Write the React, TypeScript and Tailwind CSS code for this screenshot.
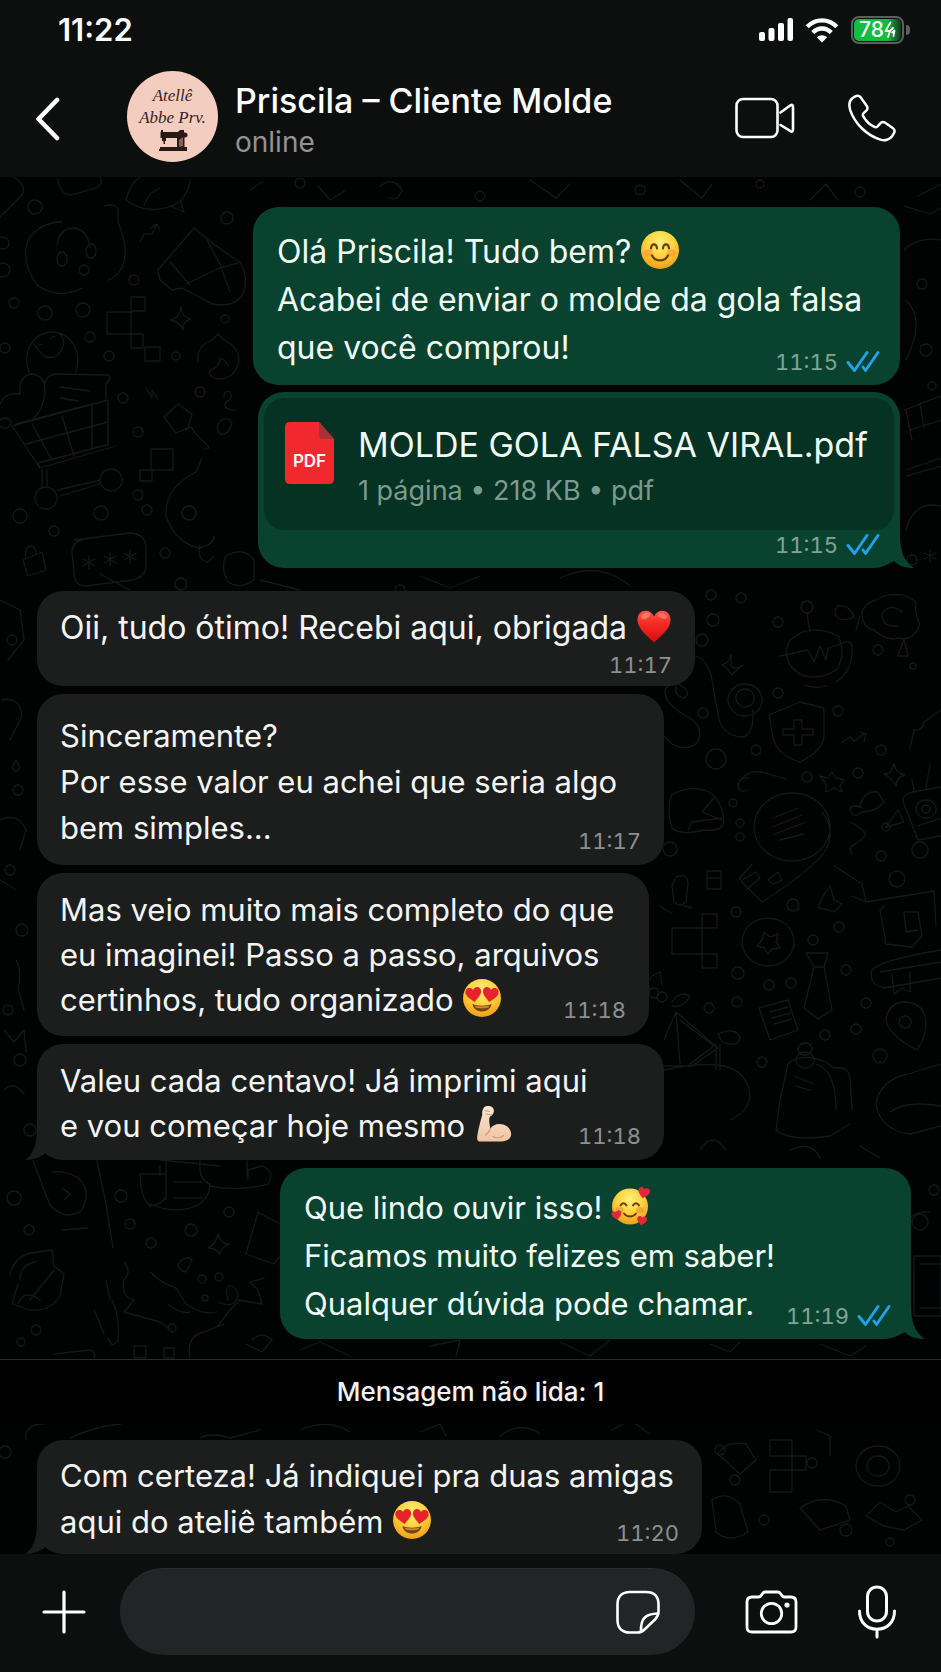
import React, { ReactNode } from "react";

const FONT = "font-['Inter','Liberation_Sans',sans-serif]";

/* ---------- emoji ---------- */

function Emoji({ label, children }: { label: string; children: ReactNode }) {
  return (
    <svg role="img" aria-label={label} viewBox="0 0 40 40" className="inline-block size-10 align-[-7px]">
      {children}
    </svg>
  );
}

function FaceFill({ id }: { id: string }) {
  return (
    <defs>
      <radialGradient id={id} cx="50%" cy="30%" r="72%">
        <stop offset="0" stopColor="#fff07a" />
        <stop offset="0.5" stopColor="#fed33d" />
        <stop offset="1" stopColor="#f09a16" />
      </radialGradient>
    </defs>
  );
}

const HEART = "M0 -2.6C-1.4 -5.6 -6.2 -4.8 -5.8 -.8C-5.4 2.4 -1.6 4.6 0 6.4C1.6 4.6 5.4 2.4 5.8 -.8C6.2 -4.8 1.4 -5.6 0 -2.6Z";

function SmileEmoji() {
  return (
    <Emoji label="rosto sorridente">
      <FaceFill id="face-smile" />
      <circle cx="20" cy="20" r="19" fill="url(#face-smile)" />
      <ellipse cx="8.5" cy="23" rx="4.5" ry="3.4" fill="#f7843a" opacity="0.45" />
      <ellipse cx="31.5" cy="23" rx="4.5" ry="3.4" fill="#f7843a" opacity="0.45" />
      <g fill="none" stroke="#6b3d10" strokeWidth="2.2" strokeLinecap="round">
        <path d="M11 18.5C11.5 13 16.5 13 17 18.5" />
        <path d="M23 18.5C23.500 13 28.5 13 29 18.5" />
        <path d="M12 25.5C15 32 25 32 28 25.5" />
      </g>
    </Emoji>
  );
}

function HeartEyesEmoji({ id }: { id: string }) {
  return (
    <Emoji label="rosto com olhos de coração">
      <FaceFill id={id} />
      <circle cx="20" cy="20" r="19" fill={"url(#" + id + ")"} />
      <path d={HEART} transform="translate(11.500 15.500) rotate(-8) scale(1.35)" fill="#e8222c" />
      <path d={HEART} transform="translate(28.500 15.500) rotate(8) scale(1.35)" fill="#e8222c" />
      <path d="M10.500 26C15 28.200 25 28.200 29.500 26C28.500 36 11.500 36 10.500 26Z" fill="#7a420f" />
      <path d="M13 27.600C17 28.800 23 28.800 27 27.600L26.500 29.500C23 30.400 17 30.400 13.500 29.500Z" fill="#c98a3a" />
    </Emoji>
  );
}

function HeartEmoji() {
  return (
    <svg role="img" aria-label="coração" viewBox="0 0 36 36" className="inline-block size-9 align-[-5px]">
      <defs>
        <linearGradient id="heart-red" x1="0" y1="0" x2="0" y2="1">
          <stop offset="0" stopColor="#ff5a4a" />
          <stop offset="0.4" stopColor="#f32b23" />
          <stop offset="1" stopColor="#d80c10" />
        </linearGradient>
      </defs>
      <path d="M18 8.500C14.500 0 1.500 1 1.500 12C1.500 21 11 27.500 18 34.500C25 27.500 34.500 21 34.500 12C34.500 1 21.500 0 18 8.500Z" fill="url(#heart-red)" />
      <ellipse cx="9.500" cy="8" rx="4.500" ry="2.500" fill="#ff9a88" opacity="0.6" transform="rotate(-25 9.500 8)" />
      <ellipse cx="26.500" cy="8" rx="4.500" ry="2.500" fill="#ff9a88" opacity="0.5" transform="rotate(20 26.500 8)" />
    </svg>
  );
}

function BicepsEmoji() {
  return (
    <Emoji label="bíceps flexionado">
      <defs>
        <linearGradient id="skin" x1="0" y1="0" x2="0" y2="1">
          <stop offset="0" stopColor="#fbe6d3" />
          <stop offset="1" stopColor="#efc4a4" />
        </linearGradient>
      </defs>
      <path
        d="M10 3.500C12 1.500 17 1.500 19 4C20.500 6 20 9.500 18 11.200C17 12.200 16 12 15.500 13.500C14.800 17 15.500 20.500 16.500 24.500C19 20.500 24 19 29 20.500C34.500 22 38 27 37 31.500C36 36 31 37.800 26 37.500H6C3.500 37.500 3 36 3.200 33C4 26 6.500 17 8.200 11C8 8 8.500 5 10 3.500Z"
        fill="url(#skin)"
      />
      <path d="M16.500 24.500C15.500 27 15 29 11.500 31M29.500 31.500C26 34.500 21.500 34 19 32.500M11 6.500L15.500 7.500M12 10L17.500 11" fill="none" stroke="#cf9a78" strokeWidth="1.200" strokeLinecap="round" />
    </Emoji>
  );
}

function LovedEmoji() {
  return (
    <Emoji label="rosto sorridente com corações">
      <FaceFill id="face-loved" />
      <circle cx="19" cy="20.500" r="18" fill="url(#face-loved)" />
      <ellipse cx="8.500" cy="24" rx="4" ry="3" fill="#f5743a" opacity="0.45" />
      <ellipse cx="29" cy="24" rx="4" ry="3" fill="#f5743a" opacity="0.45" />
      <g fill="none" stroke="#6b3d10" strokeWidth="1.900" strokeLinecap="round">
        <path d="M9.500 19.500C11 16.500 14 16.500 15.500 19.500" />
        <path d="M22 19.500C23.500 16.500 26.500 16.500 28 19.500" />
        <path d="M13 27.500C16 31.500 22 31.500 25 27.500" />
      </g>
      <path d={HEART} transform="translate(33 6) rotate(12) scale(1)" fill="#e3263a" />
      <path d={HEART} transform="translate(5.500 28.500) rotate(-10) scale(.85)" fill="#e3263a" />
      <path d={HEART} transform="translate(31 34) rotate(8) scale(.85)" fill="#e3263a" />
    </Emoji>
  );
}

/* ---------- wallpaper ---------- */

const DOTS: [number, number, number][] = [
  [35, 207, 7], [3, 243, 6], [3, 270, 7], [14, 303, 5], [45, 313, 7], [83, 310, 7], [134, 280, 5], [90, 337, 5],
  [5, 348, 5], [109, 356, 5], [176, 356, 4], [227, 218, 6], [225, 319, 4], [200, 392, 5], [123, 398, 5], [138, 432, 5],
  [20, 516, 7], [54, 531, 5], [101, 513, 7], [147, 510, 5], [189, 513, 7], [165, 553, 5], [181, 584, 6], [138, 495, 5],
  [711, 595, 5], [713, 620, 6], [702, 640, 6], [741, 598, 5], [807, 607, 6], [778, 622, 5], [878, 650, 5], [913, 666, 3],
  [778, 693, 5], [703, 713, 5], [756, 750, 5], [716, 759, 10], [838, 711, 5], [881, 750, 5], [807, 777, 5], [858, 773, 5],
  [733, 803, 4], [740, 823, 4], [740, 837, 4], [670, 849, 7], [886, 827, 4], [881, 856, 5], [897, 879, 8], [793, 905, 6],
  [736, 912, 5], [839, 927, 5], [813, 940, 5], [738, 973, 6], [769, 985, 5], [791, 983, 5], [846, 970, 5], [709, 1008, 5],
  [737, 1002, 5], [866, 1003, 5], [856, 1029, 5], [825, 1035, 5], [762, 1062, 5], [880, 1056, 7],
  [14, 1198, 7], [29, 1230, 5], [121, 1196, 6], [130, 1224, 5], [151, 1243, 5], [191, 1230, 6], [229, 1212, 5],
  [36, 1330, 5], [21, 1342, 4], [172, 1328, 4], [219, 1277, 4], [202, 1279, 4], [205, 1298, 3], [5, 1452, 6],
  [920, 1222, 8], [934, 1190, 5], [926, 350, 6], [932, 386, 4], [922, 284, 5], [912, 560, 5], [12, 640, 5], [18, 790, 5],
  [10, 870, 5], [22, 930, 6], [8, 1010, 5], [20, 1060, 6], [720, 1450, 5], [764, 1520, 5], [846, 1530, 6], [910, 1500, 5],
  [890, 1542, 4], [735, 1480, 5], [400, 590, 5], [300, 183, 5], [480, 196, 5], [640, 190, 5], [760, 184, 4], [860, 192, 5],
];

const DOODLES = [
  "M0 217L22 195Q26 190 20 182L14 177M58 180Q60 195 72 195L96 188Q104 184 100 177",
  "M126 200Q130 184 140 177M126 200Q150 218 180 202Q190 190 190 180M144 205L150 194L160 188M180 200L184 212L170 206",
  "M38 286Q20 262 28 240Q40 222 62 222M38 286Q60 300 82 288M104 206Q118 202 118 212L118 222Q130 250 122 268Q116 278 108 280M57 244Q60 228 74 228Q88 230 90 248M62 252a5 7 0 1 0 .1 0M91 244a5 7 0 1 0 .1 0M84 265a5 5 0 1 0 .1 0",
  "M140 242L144 234L152 234L157 224M151 228L157 224L160 230",
  "M194 228L158 270L160 280L172 290L182 288L212 304Q232 308 242 296Q250 280 240 262Q220 250 194 228M170 262L190 285M186 284L220 268L241 262M222 270L230 292M207 240L222 268",
  "M131 297h14v14h-14zM107 312h24v22h-24zM131 334h12v14h-12zM145 347h15v14h-15z",
  "M181 307Q182 318 191 319Q182 321 183 330Q180 322 171 320Q180 318 181 307Z",
  "M29 372Q22 352 36 338Q52 326 68 338Q82 350 76 372M34 344Q48 368 62 350Q66 340 60 334M37 346l5-2M51 338l4-2",
  "M198 362Q196 346 212 340L218 334L224 340Q238 346 239 360Q236 378 220 379Q208 378 210 370Q220 368 220 358Q226 360 228 366",
  "M0 404Q4 392 20 394Q18 376 32 374Q46 376 45 392Q44 408 34 418M45 392Q42 376 56 374L108 375Q112 378 106 384L106 398M60 387L90 391M60 398L78 401",
  "M12 426L108 400V446M12 426L40 468L116 446M40 468L38 463L106 445M16 424L92 404V450M32 424L52 460M62 416L74 456M26 444L108 422M42 470V488M47 470V486M60 496L100 484M58 490L100 480",
  "M5 418a6 5 0 1 0 .1 0M46 487a11 11 0 1 0 .1 0M111 469a11 11 0 1 0 .1 0",
  "M146 388L152 398L152 390L158 400M164 417L178 404L192 414L188 428L176 433ZM186 430Q192 424 194 432L206 444Q212 450 204 449",
  "M151 449h22v21h-22zM140 470h12v11h-12z",
  "M202 458L196 472Q164 488 166 516Q176 544 200 548Q214 544 214 536M189 506a7 7 0 1 0 .1 0M200 545Q196 560 208 562L214 556",
  "M224 396Q224 390 230 392Q234 398 226 402Q222 410 236 410M222 420Q230 416 232 424Q228 436 220 434Q214 426 222 420",
  "M23 560L42 552L46 570L28 576ZM26 558Q24 546 32 546Q36 548 36 554",
  "M74 540L130 533Q146 534 146 548L146 568Q144 578 132 580L86 586Q74 586 74 572L72 552Q72 542 84 539",
  "M89 556v13M83 559l12 7M95 559l-12 7M110 553v13M104 556l12 7M116 556l-12 7M130 550v13M124 553l12 7M136 553l-12 7",
  "M226 556Q244 546 254 560L254 580Q240 590 228 582Q220 568 226 556",
  "M696 656Q708 660 712 680L718 715Q722 736 742 737Q754 736 753 710M665 690Q672 680 682 686Q692 694 684 698Q674 696 676 686M665 690Q664 705 690 718Q704 728 698 742Q688 752 672 744L664 736",
  "M731 664Q732 672 743 665Q734 672 732 675Q728 668 722 665Q730 662 731 655ZM745 684a17 16 0 1 0 .1 0M745 689a9 9 0 1 0 .1 0",
  "M807 614L810 632M790 640Q810 622 838 636Q846 650 838 668Q824 680 804 676Q786 668 786 650ZM780 656L808 650L814 662L820 646L826 660L828 648L846 642Q856 640 850 664Q846 676 836 682M804 685Q816 689 826 686",
  "M838 606Q848 604 854 616Q848 622 838 618Q832 612 838 606M862 612Q866 602 876 600Q898 588 916 602Q914 614 920 624Q914 642 898 638Q888 642 874 630Q862 628 862 612M902 612Q890 602 882 614Q882 628 898 626M904 640L908 656L898 656ZM856 630l4-14",
  "M769 715L800 702L824 708L824 735Q824 750 800 762Q774 754 772 732ZM794 720h8v9h11v6h-11v10h-8v-10h-11v-6h11z",
  "M842 742L850 737L854 741L864 734M860 732L866 734L864 742M910 748L914 730Q922 732 924 722L941 710",
  "M741 780Q748 770 762 772L786 779M748 778Q740 776 738 786Q740 794 748 790M820 776L828 778L832 772L836 778L844 780L840 786L842 792L834 788L826 792L826 784Z",
  "M894 764Q896 774 905 775Q896 777 896 786Q892 778 884 774Q892 774 894 764M672 794Q690 786 704 790Q722 796 724 822Q722 832 704 830Q680 836 672 828Q666 810 672 794M714 798L702 812L722 820M688 830L692 822L722 818",
  "M792 793a38 34 0 1 0 .1 0M822 812Q836 828 826 850Q812 870 762 902L742 882L740 878L752 864M773 818L798 808M772 827L802 815M775 834L806 822M780 840L804 834M742 880L756 872L760 878L746 890M768 880l10-8l4 8l-8 4z",
  "M860 806Q864 790 878 792L884 802Q876 812 862 812Q852 820 850 808Q854 804 862 808M850 822Q862 828 866 834Q862 840 852 846Q848 850 852 854",
  "M904 804Q900 796 912 792L941 787M904 804L918 840L941 836M914 790L912 780M926 788L930 764M926 800a10 9 0 1 0 .1 0M926 805a4 4 0 1 0 .1 0M918 826L941 818M886 827L904 822L898 810ZM920 842a8 8 0 1 0 .1 0",
  "M676 877Q688 872 688 884L686 902Q680 908 674 902L672 886ZM672 914l-12-8M684 906l8 2M707 871h14v18h-14zM707 878h14",
  "M672 928h30v26h-30zM702 914h15v14h-15zM702 954h15v14h-15zM702 928v26",
  "M768 918a26 24 0 1 0 .1 0M764 932L770 937L778 934L776 942L780 948L772 949L768 954L764 948L757 946L762 940Z",
  "M830 886l4 14l8 4l-8 8l-6-2l-10-2l4-10zM834 866L850 876L862 884L866 902L934 891L936 926M866 902L852 896",
  "M880 910L886 944L912 947L922 936L918 912L904 912L906 932L918 930M880 910l4-4",
  "M806 953H828L824 967H814ZM814 967L804 1008L818 1019L832 1010L824 967",
  "M872 970Q880 960 941 950M872 970Q868 984 884 988L941 978M892 974L894 994L902 988L910 992L910 972M880 972L941 962",
  "M640 994L652 976L660 972L662 984M645 984a5 5 0 1 0 .1 0M654 988a5 5 0 1 0 .1 0M662 992a5 5 0 1 0 .1 0M672 1002Q680 990 690 996Q684 1008 672 1006",
  "M759 1008L788 1000L798 1030L770 1040ZM770 1012l18-5M772 1018l18-5M774 1024l18-5",
  "M917 1050Q886 1034 886 1018Q890 1002 906 1002Q926 1004 926 1024Q926 1036 917 1050M905 1016a6 6 0 1 0 .1 0",
  "M664 1040L676 1012L718 1048L692 1066H664M676 1012L680 1064M680 1020L714 1046L690 1064M720 1044V1070M716 1044V1070M718 1034Q736 1026 740 1038Q738 1048 722 1042ZM664 1070Q700 1062 724 1066Q748 1072 750 1096Q748 1112 730 1120",
  "M780 1100L788 1064Q800 1052 826 1062L834 1068Q850 1066 850 1080L852 1110M805 1043a7 6 0 1 0 .1 0M805 1052a9 8 0 1 0 .1 0M816 1064Q836 1070 836 1110M780 1100L776 1130Q790 1142 830 1136L850 1124M794 1076l20 8M796 1086l14 4",
  "M876 1104Q880 1080 908 1074L941 1064M876 1104Q880 1130 910 1134L941 1126M890 1112Q906 1100 941 1106",
  "M33 1161L50 1205Q66 1222 82 1210Q92 1190 78 1178Q66 1170 52 1172M62 1188l8 6l-6 6M97 1161L106 1204L113 1248M62 1230L88 1228",
  "M140 1174H166V1196Q164 1204 150 1206Q140 1196 140 1174M166 1161V1200M150 1204Q178 1216 200 1204Q210 1196 210 1184Q198 1180 200 1161M174 1182h28M174 1198h28M210 1186Q240 1192 268 1184Q276 1172 262 1166L248 1170V1180M247 1161V1176",
  "M218 1234Q220 1244 229 1244Q220 1248 220 1254Q216 1248 208 1248Q216 1244 218 1234M258 1212L246 1254L274 1264L280 1256M258 1212L280 1224",
  "M10 1275Q14 1254 38 1252L52 1250L54 1266L64 1274L60 1296Q50 1312 30 1310L12 1304L18 1284M20 1280Q20 1264 36 1262M30 1300L54 1270M18 1304Q24 1288 40 1300",
  "M124 1262Q132 1272 124 1280Q120 1296 134 1300L124 1312L160 1322L172 1330M150 1272Q162 1284 176 1288L186 1304Q204 1316 216 1312M168 1304Q180 1314 190 1312M178 1264Q186 1254 192 1260L186 1272Q178 1270 178 1264M218 1302Q236 1310 238 1294Q232 1280 226 1290L228 1300M238 1300L262 1304L258 1290L250 1282L264 1278M218 1326L230 1310L238 1302M190 1358Q186 1336 204 1332L224 1324",
  "M106 1280L110 1300M94 1310L104 1334M112 1300Q120 1316 118 1340Q112 1350 108 1338M54 1354L90 1350Q96 1352 94 1358M134 1346h12v12h-12zM164 1348h10v10h-10zM246 1344L262 1352L272 1340Q262 1330 252 1340",
  "M26 1440Q24 1424 44 1424M70 1438Q96 1426 120 1424L142 1418M200 1438Q212 1432 230 1438L260 1430M300 1430Q330 1418 350 1432M420 1432L440 1424L446 1436M500 1436Q520 1420 540 1434M612 1430L630 1420L650 1434",
  "M718 1454Q726 1440 746 1444L756 1460L740 1474ZM770 1440h22v16h-22zM792 1456h14v14h-14zM770 1470h22v22h-22zM816 1430L830 1436L830 1456M812 1458a5 5 0 1 0 .1 0",
  "M878 1446a22 20 0 1 0 .1 0M878 1456a11 10 0 1 0 .1 0M712 1500Q726 1490 740 1504L748 1532Q730 1544 716 1532ZM800 1508Q824 1492 846 1506L850 1520L820 1530ZM866 1516L880 1502L896 1512L908 1506L922 1520L904 1530L884 1526Z",
  "M0 600L20 610L24 640L8 660M2 700Q20 696 22 716L10 740M16 760l4 8l-4 4l-4-4zM0 820Q18 812 26 830L20 850M0 880L16 890M16 960Q22 970 18 988L24 1010M4 1030L14 1042L24 1030L26 1052M4 1090Q14 1080 24 1094M30 1124a6 6 0 1 0 .1 0",
  "M904 410L941 396M906 410L912 440M910 430L941 420M906 470L941 458M906 476L941 466M920 404L924 428M904 250Q918 236 941 240M918 196L941 184M904 206L930 214L941 208M906 300Q926 320 906 360M906 530Q914 500 941 506M930 550v12M924 553l12 6M936 553l-12 6",
  "M318 186L330 200L346 190M380 186Q394 176 402 190Q398 202 388 198M530 180L556 198L570 184M680 180L702 198L712 184M810 200L826 184L838 200M250 190L262 182",
  "M160 1166V1175M270 1144M100 574L130 590M260 580L300 590M420 576L450 588L480 576M560 578Q600 560 630 586M160 1160L220 1166",
  "M904 1226Q912 1210 930 1212M914 1256h27v60h-27zM920 1264h21v44h-21M700 1150Q712 1130 726 1150M790 1150Q812 1140 820 1158M860 1146L880 1158M300 1350L320 1342L350 1356M430 1346L460 1340L456 1356M560 1342L590 1356L610 1340M710 1344L730 1352L740 1342M820 1344L850 1356L866 1346",
];

function Wallpaper() {
  return (
    <svg
      aria-hidden="true"
      viewBox="0 177 941 1377"
      preserveAspectRatio="xMidYMin slice"
      className="absolute inset-0 h-full w-full"
      fill="none"
      stroke="#161919"
      strokeWidth="1.300"
      strokeLinejoin="round"
      strokeLinecap="round"
    >
      {DOODLES.map((d, i) => (
        <path key={i} d={d} />
      ))}
      {DOTS.map(([x, y, r], i) => (
        <circle key={i} cx={x} cy={y} r={r} />
      ))}
    </svg>
  );
}

/* ---------- message parts ---------- */

function Ticks() {
  return (
    <svg role="img" aria-label="lida" viewBox="0 0 34 24" className="h-6 w-[34px]" fill="none" stroke="#25a0ea" strokeWidth="2.900" strokeLinecap="round" strokeLinejoin="round">
      <path d="M2 12.500L8.500 20.500L21 2.500" />
      <path d="M17 17L19.500 20.500L32 2.500" />
    </svg>
  );
}

function Stamp({ time, mine = false, low = false }: { time: string; mine?: boolean; low?: boolean }) {
  return (
    <span className={`ml-auto flex shrink-0 items-end gap-2 text-[22px] leading-6 tabular-nums ${mine ? "text-[#83a395]" : "text-[#8d8f90]"} ${low ? "-mb-0.5" : ""}`}>
      <time>{time}</time>
      {mine && <Ticks />}
    </span>
  );
}

function Tail({ mine }: { mine: boolean }) {
  return mine ? (
    <svg aria-hidden="true" viewBox="0 0 26 36" className="absolute -right-3.5 bottom-0 h-9 w-[26px]" fill="#09432f">
      <path d="M0 0H12C12 18 15 29 26 36C17 36 11 34 6 29L0 32Z" />
    </svg>
  ) : (
    <svg aria-hidden="true" viewBox="0 0 24 36" className="absolute bottom-0 -left-3 h-9 w-6" fill="#1c1e1e">
      <path d="M24 0H12C12 18 10 29 0 36C9 36 16 33 20 29L24 32Z" />
    </svg>
  );
}

type BubbleProps = { mine?: boolean; tail?: boolean; className: string; children: ReactNode };

function Bubble({ mine = false, tail = false, className, children }: BubbleProps) {
  return (
    <article
      className={`relative max-w-full rounded-[26px] ${mine ? "self-end bg-[#09432f] text-[#f1fbf5]" : "self-start bg-[#1c1e1e] text-[#f4f4f4]"} ${className}`}
    >
      {children}
      {tail && <Tail mine={mine} />}
    </article>
  );
}

function LastLine({ children }: { children: ReactNode }) {
  return <div className="flex items-end justify-between">{children}</div>;
}

/* ---------- header ---------- */

function StatusBar() {
  return (
    <div className="flex h-14 items-center justify-between pt-1 pr-[31px] pl-[58px]">
      <time className="text-[31px] leading-8 font-semibold">11:22</time>
      <div className="flex items-center gap-3">
        <svg aria-label="sinal" viewBox="0 0 34 24" className="h-6 w-[34px]" fill="#fff">
          <rect x="0" y="14" width="6" height="9" rx="2" />
          <rect x="9.500" y="10" width="6" height="13" rx="2" />
          <rect x="19" y="5" width="6" height="18" rx="2" />
          <rect x="28.500" y="0" width="5.500" height="23" rx="2" />
        </svg>
        <svg aria-label="wi-fi" viewBox="0 0 34 26" className="h-[26px] w-[34px]" fill="none" stroke="#fff" strokeWidth="4.400">
          <path d="M2.200 9.800C10.500 1.200 23.500 1.200 31.800 9.800" />
          <path d="M7.800 15.600C13 10.200 21 10.200 26.200 15.600" />
          <path d="M17 25.500L11.800 20.300C14.500 17.500 19.500 17.500 22.200 20.300Z" fill="#fff" stroke="none" />
        </svg>
        <div className="flex items-center gap-0.5">
          <div className="flex h-7 w-[53px] items-center rounded-lg border-2 border-[#5b605e] p-px">
            <div className="flex h-full w-full items-center justify-center rounded-[5px] bg-linear-to-r from-[#14bd40] from-70% to-[#123a1c] text-[21px] leading-6 font-medium">
              78
              <svg aria-hidden="true" viewBox="0 0 12 18" className="h-[18px] w-3" fill="none" stroke="#fff" strokeWidth="1.800" strokeLinecap="round" strokeLinejoin="round">
                <path d="M6.500 1.500L1.500 10H6L4 16M6.500 9.500L9 7M8 11.500L10.500 9.500L9.500 15" />
              </svg>
            </div>
          </div>
          <span className="h-2.5 w-1 rounded-r bg-[#5b605e]" />
        </div>
      </div>
    </div>
  );
}

function Avatar() {
  return (
    <div className="flex size-[91px] shrink-0 flex-col items-center rounded-full bg-[#f3cdbf] pt-3.5 font-['Z003','URW_Chancery_L','Liberation_Serif',cursive] text-[17px] leading-[22px] text-[#3a231d] italic">
      <span>Atellê</span>
      <span>Abbe Prv.</span>
      <svg aria-hidden="true" viewBox="0 0 30 23" className="h-[23px] w-[30px]" fill="#2a1a17">
        <path d="M3 1H5V3H20L22 1H26V4H28V7H26.500V18H29V22H1V20H2V18H19V9H8V12H7V15H5.500V12H4V9H2.500V3H3Z" />
        <circle cx="27" cy="6" r="2.500" />
        <path d="M21 11L25 8V17L21 18Z" fill="#8b6258" />
      </svg>
    </div>
  );
}

function Header() {
  return (
    <header className="bg-[#0d0f0f] pb-px text-white">
      <StatusBar />
      <div className="flex h-[120px] items-center pr-[45px] pl-[35px]">
        <button type="button" aria-label="Voltar" className="mt-1.5 mr-[66px]">
          <svg viewBox="0 0 26 44" className="h-11 w-[26px]" fill="none" stroke="#fff" strokeWidth="4.600" strokeLinecap="round" strokeLinejoin="round">
            <path d="M22 3L3.500 22L22 41" />
          </svg>
        </button>
        <Avatar />
        <div className="min-w-0 flex-1 pt-3 pl-[17px]">
          <h1 className="truncate text-[34px] leading-[40px] font-medium">Priscila – Cliente Molde</h1>
          <p className="text-[28px] leading-[42px] text-[#929394]">online</p>
        </div>
        <div className="mt-1 flex items-center gap-[53px]">
          <button type="button" aria-label="Chamada de vídeo">
            <svg viewBox="0 0 60 42" className="h-[42px] w-[60px]" fill="none" stroke="#fff" strokeWidth="2.600" strokeLinejoin="round" strokeLinecap="round">
              <rect x="1.500" y="2" width="41" height="38" rx="6.500" />
              <path d="M45.500 15.500L55.500 8.300Q58 7 58 10V32.500Q58 35.500 55.500 34.200L45.500 28" />
            </svg>
          </button>
          <button type="button" aria-label="Chamada de voz">
            <svg viewBox="0 0 50 50" className="size-12" fill="none" stroke="#fff" strokeWidth="2.600" strokeLinejoin="round">
              <path d="M4.500 4.500L8 2.200Q11 .8 13.200 3.500L19.600 12.500Q21 14.800 19.500 16.800L15.800 20.500Q15 21.500 15.800 23C18.500 28 23.500 32.500 28 34.500Q29.500 35 30.500 34L34.500 29.800Q36 28.500 38 29.500L46.500 35.500Q49.500 37.500 48 40.500L46 44C43.500 47.500 38.500 49 34 47.500C20 43.500 7 31 2.200 16.500C.8 11.500 1.500 7 4.500 4.500Z" />
            </svg>
          </button>
        </div>
      </div>
    </header>
  );
}

/* ---------- composer ---------- */

function Composer() {
  return (
    <footer className="bg-[#0d0f0f] pt-3.5 pb-[17px] text-white">
      <form className="flex items-center pr-11 pl-[42px]" onSubmit={(e) => e.preventDefault()}>
        <button type="button" aria-label="Anexar" className="shrink-0">
          <svg viewBox="0 0 44 44" className="size-11" stroke="#fff" strokeWidth="3.200" strokeLinecap="round">
            <path d="M2 22H42M22 2V42" />
          </svg>
        </button>
        <div className="ml-[34px] flex h-[87px] min-w-0 flex-1 items-center rounded-full border-t border-[#2a2c2d] bg-[#222425] pr-[35px] pl-8">
          <input type="text" aria-label="Mensagem" className="h-full w-full min-w-0 flex-1 bg-transparent text-[32px] text-white outline-none" />
          <button type="button" aria-label="Figurinhas" className="shrink-0">
            <svg viewBox="0 0 44 44" className="size-11" fill="none" stroke="#fff" strokeWidth="2.600" strokeLinejoin="round" strokeLinecap="round">
              <path d="M14 2H30C38.500 2 42.500 6.500 42.500 14.500V21.500C42.500 25 41.500 27 39 29.500L28.500 39.500C26.500 41.500 24.500 42.500 21.500 42.500H14C6 42.500 1.500 38 1.500 30V14.500C1.500 6.500 6 2 14 2Z" />
              <path d="M42 23.500C30 24 24.500 27.500 25 41.500" />
            </svg>
          </button>
        </div>
        <button type="button" aria-label="Câmera" className="ml-[50px] shrink-0">
          <svg viewBox="0 0 54 44" className="h-11 w-[54px]" fill="none" stroke="#fff" strokeWidth="2.800" strokeLinejoin="round">
            <path d="M7 7H13.500Q15.500 7 16.500 5L17.500 3.500Q18.500 2 20.500 2H32.500Q34.500 2 35.500 3.500L36.500 5Q37.500 7 39.500 7H46Q51 7 51 12V37Q51 42 46 42H7Q2 42 2 37V12Q2 7 7 7Z" />
            <circle cx="26.500" cy="23.500" r="10.200" />
            <circle cx="42" cy="15" r="2.600" fill="#fff" stroke="none" />
          </svg>
        </button>
        <button type="button" aria-label="Gravar áudio" className="ml-[58px] shrink-0">
          <svg viewBox="0 0 40 54" className="h-[54px] w-10" fill="none" stroke="#fff" strokeWidth="3" strokeLinecap="round">
            <rect x="10.500" y="2" width="19" height="34" rx="9.500" />
            <path d="M2.500 26C2.500 37.500 10 44.200 20 44.200C30 44.200 37.500 37.500 37.500 26M20 44.200V52" />
          </svg>
        </button>
      </form>
    </footer>
  );
}

/* ---------- page ---------- */

export default function App() {
  return (
    <div className={`flex min-h-screen flex-col bg-[#010303] ${FONT}`}>
      <Header />
      <main className="relative flex-1">
        <Wallpaper />
        <div className="relative flex flex-col pt-[30px] text-[31px]">
          <section className="flex flex-col gap-[7px] pr-[41px] pl-[37px] text-[32px] leading-12">
            <Bubble mine className="w-[647px] pt-[21px] pr-5 pb-[13px] pl-6">
              <p>
                Olá Priscila! Tudo bem? <SmileEmoji />
              </p>
              <p className="whitespace-nowrap">Acabei de enviar o molde da gola falsa</p>
              <LastLine>
                <p>que você comprou!</p>
                <Stamp time="11:15" mine low />
              </LastLine>
            </Bubble>

            <Bubble mine tail className="w-[642px] px-1.5 pt-1.5 pb-[11px]">
              <a href="#molde" className="flex h-[132px] items-start rounded-[20px] bg-[#053223] pt-6 pl-[21px]">
                <svg role="img" aria-label="PDF" viewBox="0 0 49 62" className="mr-6 h-[62px] w-[49px] shrink-0">
                  <path d="M5 0H34L49 17V57Q49 62 44 62H5Q0 62 0 57V5Q0 0 5 0Z" fill="#f1292f" />
                  <path d="M34 0L49 17H38Q34 17 34 13Z" fill="#a83238" />
                  <text x="24.500" y="45" textAnchor="middle" fill="#fff" fontSize="17" fontWeight="600">
                    PDF
                  </text>
                </svg>
                <span className="min-w-0">
                  <span className="block text-[34px] leading-[46px] whitespace-nowrap">MOLDE GOLA FALSA VIRAL.pdf</span>
                  <span className="block text-[27px] leading-[46px] text-[#7c9b8e]">1 página • 218 KB • pdf</span>
                </span>
              </a>
              <div className="flex pt-[3px] pr-3.5">
                <Stamp time="11:15" mine />
              </div>
            </Bubble>
          </section>

          <section className="mt-[23px] flex flex-col gap-2 pr-[41px] pl-[37px] leading-[46px]">
            <Bubble className="w-[658px] px-[23px] pt-3.5 pb-[9px] text-[32px]">
              <p>
                Oii, tudo ótimo! Recebi aqui, obrigada <HeartEmoji />
              </p>
              <div className="flex pt-0.5">
                <Stamp time="11:17" />
              </div>
            </Bubble>

            <Bubble className="w-[627px] px-[23px] pt-[19px] pb-3.5">
              <p>Sinceramente?</p>
              <p>Por esse valor eu achei que seria algo</p>
              <LastLine>
                <p>bem simples...</p>
                <Stamp time="11:17" low />
              </LastLine>
            </Bubble>

            <Bubble className="w-[612px] px-[23px] pt-3.5 pb-3.5 leading-[45px]">
              <p>Mas veio muito mais completo do que</p>
              <p>eu imaginei! Passo a passo, arquivos</p>
              <LastLine>
                <p>
                  certinhos, tudo organizado <HeartEyesEmoji id="face-love-a" />
                </p>
                <Stamp time="11:18" />
              </LastLine>
            </Bubble>

            <Bubble tail className="w-[627px] px-[23px] pt-3.5 pb-3 leading-[45px]">
              <p>Valeu cada centavo! Já imprimi aqui</p>
              <LastLine>
                <p>
                  e vou começar hoje mesmo <BicepsEmoji />
                </p>
                <Stamp time="11:18" />
              </LastLine>
            </Bubble>
          </section>

          <section className="mt-2 flex flex-col pr-[30px] pl-[37px] leading-12">
            <Bubble mine tail className="w-[631px] pt-4 pr-5 pb-[11px] pl-6">
              <p>
                Que lindo ouvir isso! <LovedEmoji />
              </p>
              <p>Ficamos muito felizes em saber!</p>
              <LastLine>
                <p>Qualquer dúvida pode chamar.</p>
                <Stamp time="11:19" mine />
              </LastLine>
            </Bubble>
          </section>

          <div className="mt-5 border-t border-[#2a2c2c] bg-black py-4 text-center text-[26px] leading-8 font-medium text-[#f2f2f2]">
            Mensagem não lida: 1
          </div>

          <section className="mt-4 flex flex-col pr-[41px] pl-[37px] leading-[46px]">
            <Bubble tail className="w-[665px] px-[23px] pt-[13px] pb-[9px]">
              <p>Com certeza! Já indiquei pra duas amigas</p>
              <LastLine>
                <p>
                  aqui do ateliê também <HeartEyesEmoji id="face-love-b" />
                </p>
                <Stamp time="11:20" />
              </LastLine>
            </Bubble>
          </section>
        </div>
      </main>
      <Composer />
    </div>
  );
}
